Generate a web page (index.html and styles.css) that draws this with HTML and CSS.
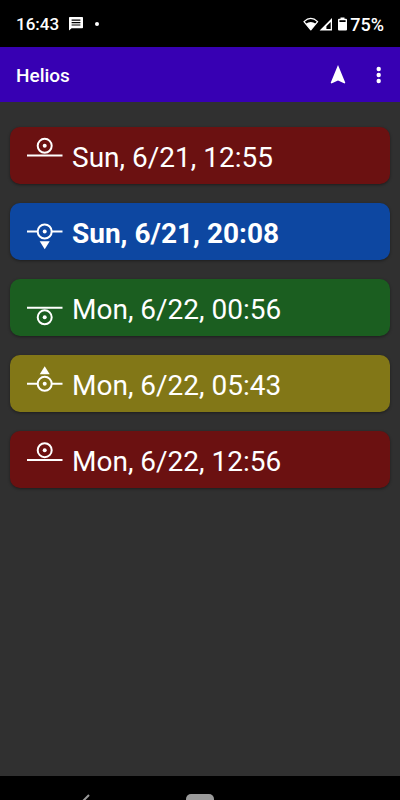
FILE: index.html
```html
<!DOCTYPE html>
<html lang="en">
<head>
<meta charset="utf-8">
<meta name="viewport" content="width=device-width, initial-scale=1">
<title>Helios</title>
<link rel="stylesheet" href="styles.css">
</head>
<body>
<div class="status">
  <span class="clock">16:43</span>
  <svg class="message" width="14" height="14" viewBox="0 0 14 14" aria-hidden="true">
    <path fill="#fff" d="M.8 0H13.2Q14 0 14 .8V10.400Q14 11.200 13.200 11.200H2.600L0 13.600V.8Q0 0 .8 0Z"/>
    <path stroke="#000" stroke-width="1.200" d="M2.600 3.200H11.400M2.600 5.600H11.400M2.600 8H11.400"/>
  </svg>
  <span class="dot"></span>
  <span class="spacer"></span>
  <svg width="46" height="15" viewBox="0 0 46 15" aria-hidden="true">
    <path fill="none" stroke="#fff" stroke-width="1.300" stroke-linejoin="round" d="M1 4.600Q7.800-1.800 14.600 4.600L7.800 12.800Z"/>
    <path fill="#fff" d="M2.800 6.800Q7.800 3.400 12.800 6.800L7.800 12.800Z"/>
    <path fill="#fff" fill-rule="evenodd" d="M29 1V13.400H16.600ZM27.700 5L23.400 9.200V12.100H27.700Z"/>
    <path fill="#fff" d="M37.500 .4H41.500V1.800H43Q44 1.800 44 2.800V12.400Q44 13.400 43 13.400H36Q35 13.400 35 12.400V2.800Q35 1.800 36 1.800H37.500Z"/>
    <path fill="#000" d="M36.400 3.200H42.600V5H36.400Z"/>
  </svg>
  <span class="charge">75%</span>
</div>
<header class="bar">
  <h1>Helios</h1>
  <button type="button" aria-label="Locate">
    <svg width="16" height="20" viewBox="0 0 16 20"><path fill="#fff" d="M8 0L15.300 17.800L14.600 18.500L8 15.500L1.400 18.500L.7 17.800Z"/></svg>
  </button>
  <button type="button" aria-label="More options">
    <svg width="6" height="18" viewBox="0 0 6 18"><g fill="#fff"><circle cx="2.700" cy="3" r="2.200"/><circle cx="2.700" cy="9" r="2.200"/><circle cx="2.700" cy="15" r="2.200"/></g></svg>
  </button>
</header>
<main>
  <ul class="events">
    <li class="noon">
      <svg class="sun" viewBox="0 0 36 41" aria-hidden="true"><path d="M0 20.500H35.500"/><circle cx="17.700" cy="10.800" r="7"/><circle class="core" cx="17.700" cy="10.800" r="2"/></svg>
      <span>Sun, 6/21, 12:55</span>
    </li>
    <li class="sunset">
      <svg class="sun" viewBox="0 0 36 41" aria-hidden="true"><path d="M0 20.500H10.700M24.700 20.500H35.500"/><circle cx="17.700" cy="20.500" r="7"/><circle class="core" cx="17.700" cy="20.500" r="2"/><path class="core" d="M12.700 30.300H22.700L17.700 38.300Z"/></svg>
      <span>Sun, 6/21, 20:08</span>
    </li>
    <li class="midnight">
      <svg class="sun" viewBox="0 0 36 41" aria-hidden="true"><path d="M0 20.700H35.500"/><circle cx="17.700" cy="30.300" r="7"/><circle class="core" cx="17.700" cy="30.300" r="2"/></svg>
      <span>Mon, 6/22, 00:56</span>
    </li>
    <li class="sunrise">
      <svg class="sun" viewBox="0 0 36 41" aria-hidden="true"><path d="M0 20.800H10.700M24.700 20.800H35.500"/><circle cx="17.700" cy="20.800" r="7"/><circle class="core" cx="17.700" cy="20.800" r="2"/><path class="core" d="M12.700 11.200H22.700L17.700 3.200Z"/></svg>
      <span>Mon, 6/22, 05:43</span>
    </li>
    <li class="noon">
      <svg class="sun" viewBox="0 0 36 41" aria-hidden="true"><path d="M0 20.900H35.500"/><circle cx="17.700" cy="11.200" r="7"/><circle class="core" cx="17.700" cy="11.200" r="2"/></svg>
      <span>Mon, 6/22, 12:56</span>
    </li>
  </ul>
</main>
<nav class="system" aria-label="System">
  <svg class="back" width="8" height="14" viewBox="0 0 8 14" aria-hidden="true"><path d="M7 1L1 7L7 13"/></svg>
  <span class="home"></span>
  <span></span>
</nav>
</body>
</html>
```
FILE: styles.css
```css
* { box-sizing: border-box; }

body {
  display: flex;
  flex-direction: column;
  height: 100vh;
  margin: 0;
  overflow: hidden;
  background: #303030;
  color: #fff;
  font-family: Roboto, "Liberation Sans", sans-serif;
}

svg { display: block; flex: none; }

.status {
  display: flex;
  flex: none;
  align-items: center;
  height: 47px;
  padding: 1px 16px 0;
  background: #000;
  font-size: 18px;
  font-weight: 500;
}

.clock { font-size: 17px; }

.message { margin-left: 10px; }

.dot {
  width: 4px;
  height: 4px;
  margin-left: 12px;
  border-radius: 50%;
  background: #fff;
}

.spacer { flex: 1; }

.charge { margin-left: 1px; }

.bar {
  display: flex;
  flex: none;
  align-items: center;
  height: 55px;
  padding: 0 8px 0 16px;
  background: #3700b3;
}

.bar h1 {
  flex: 1;
  margin: 0;
  padding-top: 1px;
  font-size: 19px;
  font-weight: 500;
}

.bar button {
  display: flex;
  align-items: center;
  justify-content: center;
  width: 27px;
  height: 48px;
  padding: 0;
  border: 0;
  background: none;
}

.bar button + button { margin-left: 14px; }

main {
  flex: 1;
  min-height: 0;
  padding: 25px 10px;
}

.events {
  display: flex;
  flex-direction: column;
  gap: 19px;
  margin: 0;
  padding: 0;
  list-style: none;
}

.events li {
  display: flex;
  align-items: center;
  gap: 9px;
  height: 57px;
  padding: 0 17px;
  border-radius: 10px;
  box-shadow: 0 1px 3px rgba(0, 0, 0, 0.4);
  font-size: 28px;
}

.events span { padding-top: 3px; }

.noon { background: #6b1111; }
.sunset { background: #0d47a1; font-weight: 700; }
.midnight { background: #1b5e20; }
.sunrise { background: #827717; }

.sun {
  width: 36px;
  height: 41px;
  fill: none;
  stroke: #fff;
  stroke-width: 2;
}

.sun .core { fill: #fff; stroke: none; }

.system {
  display: grid;
  flex: none;
  grid-template-columns: 1fr 28px 1fr;
  height: 24px;
  padding-top: 18px;
  overflow: hidden;
  background: #000;
}

.back {
  justify-self: center;
  margin-right: 14px;
  fill: none;
  stroke: #999;
  stroke-width: 2;
}

.home {
  height: 14px;
  border-radius: 5px;
  background: #9a9a9a;
}
```
